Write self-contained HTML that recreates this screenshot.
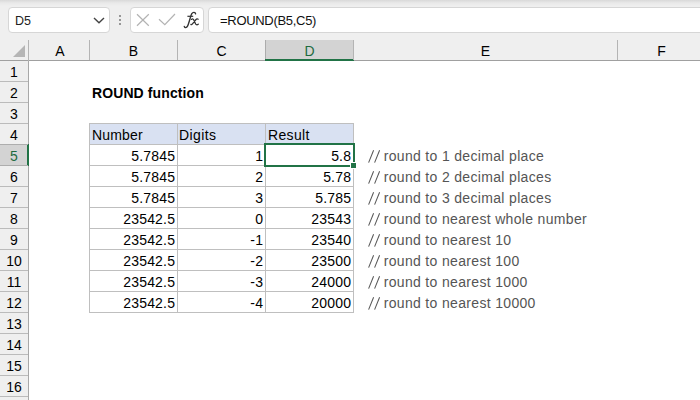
<!DOCTYPE html>
<html><head><meta charset="utf-8">
<style>
*{margin:0;padding:0;box-sizing:border-box}
html,body{width:700px;height:400px;overflow:hidden;background:#fff;font-family:"Liberation Sans",sans-serif}
.a{position:absolute}
#top{left:0;top:0;width:700px;height:40px;background:linear-gradient(#d9d9d9 0px,#e9e9e9 3px,#efefef 6px,#efefef 40px)}
.box{position:absolute;background:#fff;border:1px solid #d6d6d6;border-radius:4px}
#colhdr{left:0;top:40px;width:700px;height:21px;background:#efefef;border-bottom:1px solid #a0a0a0}
.ch{position:absolute;top:41px;height:20px;font-size:14px;line-height:20px;text-align:center;color:#000}
.vl{position:absolute;width:1px;background:#b4b4b4}
#rowhdr{left:0;top:61px;width:29px;height:339px;background:#efefef;border-right:1px solid #a8a8a8}
.rh{position:absolute;left:0;width:28px;height:20px;margin-top:1px;font-size:14px;line-height:20px;text-align:center;color:#000}
.hl{position:absolute;left:0;width:28px;height:1px;background:#bbbbbb}
.t{position:absolute;font-size:14px;white-space:pre;line-height:20px;height:20px;margin-top:1px}
.num{text-align:right;letter-spacing:0.2px}
.cm{color:#555;letter-spacing:0.33px;left:383.7px}
.sl{position:absolute;left:366px}
.sel{color:#1d6b3f}
.tb{position:absolute;background:#bfbfbf}
.cb{left:90px;width:85.2px}
.cc{left:178px;width:85.2px}
.cd{left:266px;width:85.2px}
</style></head><body>
<div id="top" class="a"></div>
<!-- name box -->
<div class="box" style="left:8px;top:7px;width:102px;height:26px"></div>
<div class="t" style="left:15px;top:10px;font-size:12.5px;color:#222">D5</div>
<svg class="a" style="left:93px;top:17px" width="12" height="7" viewBox="0 0 12 7"><path d="M1 1 L6 5.8 L11 1" fill="none" stroke="#444" stroke-width="1.4"/></svg>
<!-- dots -->
<div class="a" style="left:119px;top:15px;width:2px;height:2px;background:#7a7a7a;border-radius:1px"></div>
<div class="a" style="left:119px;top:19px;width:2px;height:2px;background:#7a7a7a;border-radius:1px"></div>
<div class="a" style="left:119px;top:23px;width:2px;height:2px;background:#7a7a7a;border-radius:1px"></div>
<!-- buttons box -->
<div class="box" style="left:130px;top:7px;width:74px;height:26px"></div>
<svg class="a" style="left:136px;top:13px" width="14" height="14" viewBox="0 0 14 14"><path d="M1 1.2 L12.8 12.8 M12.8 1.2 L1 12.8" fill="none" stroke="#b3b3b3" stroke-width="1.2"/></svg>
<svg class="a" style="left:158px;top:13px" width="18" height="13" viewBox="0 0 18 13"><path d="M1 6.3 L6.8 11.7 L17 1" fill="none" stroke="#b3b3b3" stroke-width="1.2"/></svg>
<svg class="a" style="left:180px;top:8px" width="22" height="22" viewBox="0 0 22 22"><path d="M15.6 5.9 C15.3 4.1 13 3.8 11.8 5.6 C10.5 7.6 9.2 15 7.4 18.4 C6.6 19.9 4.8 20 4.3 18.5" fill="none" stroke="#333" stroke-width="1.35" stroke-linecap="round"/><path d="M7.4 8.3 H13.2" stroke="#333" stroke-width="1.2"/><path d="M11.4 11.4 C12.4 10.6 13.4 10.9 13.9 12.3 L15.4 15.6 C15.9 16.9 17 17.1 18.3 16.2 M18.2 11.2 C17.2 10.6 16.4 11 15.6 12 L12.9 15.4 C12.1 16.5 11.4 16.9 10.9 16.5" fill="none" stroke="#333" stroke-width="1.25" stroke-linecap="round"/></svg>
<!-- formula box -->
<div class="box" style="left:208px;top:7px;width:500px;height:26px"></div>
<div class="t" style="left:220px;top:10px;font-size:13px;letter-spacing:-0.3px;color:#111">=ROUND(B5,C5)</div>

<!-- column header -->
<div id="colhdr" class="a"></div>
<div class="a" style="left:265px;top:40px;width:88px;height:19px;background:#d3d3d3"></div>
<div class="a" style="left:265px;top:59px;width:89px;height:2px;background:#217346"></div>
<div class="vl" style="left:28px;top:40px;height:21px"></div>
<div class="vl" style="left:89px;top:40px;height:20px"></div>
<div class="vl" style="left:177px;top:40px;height:20px"></div>
<div class="vl" style="left:265px;top:40px;height:19px;background:#acacac"></div>
<div class="vl" style="left:353px;top:40px;height:20px"></div>
<div class="vl" style="left:617px;top:40px;height:20px"></div>
<svg class="a" style="left:12px;top:44px" width="14" height="14" viewBox="0 0 14 14"><path d="M13 1 L13 13 L1 13 Z" fill="#b5b5b5"/></svg>
<div class="ch" style="left:30px;width:60px">A</div>
<div class="ch" style="left:90px;width:87px">B</div>
<div class="ch" style="left:178px;width:87px">C</div>
<div class="ch" style="left:266px;width:87px;color:#1d6b3f">D</div>
<div class="ch" style="left:354px;width:263px">E</div>
<div class="ch" style="left:618px;width:87px">F</div>

<!-- row header -->
<div id="rowhdr" class="a"></div>
<div class="a" style="left:0;top:145px;width:27px;height:20px;background:#d3d3d3"></div>
<div class="a" style="left:27px;top:144px;width:2px;height:22px;background:#217346"></div>
<div class="rh" style="top:61px">1</div>
<div class="hl" style="top:81px"></div>
<div class="rh" style="top:82px">2</div>
<div class="hl" style="top:102px"></div>
<div class="rh" style="top:103px">3</div>
<div class="hl" style="top:123px"></div>
<div class="rh" style="top:124px">4</div>
<div class="hl" style="top:144px;background:#adadad"></div>
<div class="rh sel" style="top:145px">5</div>
<div class="hl" style="top:165px;background:#adadad"></div>
<div class="rh" style="top:166px">6</div>
<div class="hl" style="top:186px"></div>
<div class="rh" style="top:187px">7</div>
<div class="hl" style="top:207px"></div>
<div class="rh" style="top:208px">8</div>
<div class="hl" style="top:228px"></div>
<div class="rh" style="top:229px">9</div>
<div class="hl" style="top:249px"></div>
<div class="rh" style="top:250px">10</div>
<div class="hl" style="top:270px"></div>
<div class="rh" style="top:271px">11</div>
<div class="hl" style="top:291px"></div>
<div class="rh" style="top:292px">12</div>
<div class="hl" style="top:312px"></div>
<div class="rh" style="top:313px">13</div>
<div class="hl" style="top:333px"></div>
<div class="rh" style="top:334px">14</div>
<div class="hl" style="top:354px"></div>
<div class="rh" style="top:355px">15</div>
<div class="hl" style="top:375px"></div>
<div class="rh" style="top:376px">16</div>
<div class="hl" style="top:396px"></div>
<div class="rh" style="top:397px">17</div>
<div class="hl" style="top:417px"></div>

<!-- table -->
<div class="a" style="left:89px;top:123px;width:265px;height:22px;background:#d9e1f2"></div>
<div class="a" style="left:89px;top:123px;width:265px;height:190px;border:1px solid #bfbfbf"></div>
<div class="tb" style="left:89px;top:144px;width:265px;height:1px"></div>
<div class="tb" style="left:89px;top:165px;width:265px;height:1px"></div>
<div class="tb" style="left:89px;top:186px;width:265px;height:1px"></div>
<div class="tb" style="left:89px;top:207px;width:265px;height:1px"></div>
<div class="tb" style="left:89px;top:228px;width:265px;height:1px"></div>
<div class="tb" style="left:89px;top:249px;width:265px;height:1px"></div>
<div class="tb" style="left:89px;top:270px;width:265px;height:1px"></div>
<div class="tb" style="left:89px;top:291px;width:265px;height:1px"></div>
<div class="tb" style="left:177px;top:123px;width:1px;height:190px"></div>
<div class="tb" style="left:265px;top:123px;width:1px;height:190px"></div>

<div class="t" style="left:92px;top:82px;font-weight:bold;letter-spacing:0.1px">ROUND function</div>
<div class="t" style="left:92px;top:124px;letter-spacing:0.15px">Number</div>
<div class="t" style="left:179px;top:124px;letter-spacing:0.4px">Digits</div>
<div class="t" style="left:268px;top:124px;letter-spacing:0.35px">Result</div>
<div class="t num cb" style="top:145px">5.7845</div>
<div class="t num cc" style="top:145px">1</div>
<div class="t num cd" style="top:145px">5.8</div>
<div class="t cm" style="top:145px">round to 1 decimal place</div>
<svg class="sl" style="top:149px" width="16" height="14" viewBox="0 0 16 14"><path d="M2.6 13.6 L7.6 1.2 M8.6 13.6 L13.6 1.2" stroke="#5a5a5a" stroke-width="1.05" fill="none"/></svg>
<div class="t num cb" style="top:166px">5.7845</div>
<div class="t num cc" style="top:166px">2</div>
<div class="t num cd" style="top:166px">5.78</div>
<div class="t cm" style="top:166px">round to 2 decimal places</div>
<svg class="sl" style="top:170px" width="16" height="14" viewBox="0 0 16 14"><path d="M2.6 13.6 L7.6 1.2 M8.6 13.6 L13.6 1.2" stroke="#5a5a5a" stroke-width="1.05" fill="none"/></svg>
<div class="t num cb" style="top:187px">5.7845</div>
<div class="t num cc" style="top:187px">3</div>
<div class="t num cd" style="top:187px">5.785</div>
<div class="t cm" style="top:187px">round to 3 decimal places</div>
<svg class="sl" style="top:191px" width="16" height="14" viewBox="0 0 16 14"><path d="M2.6 13.6 L7.6 1.2 M8.6 13.6 L13.6 1.2" stroke="#5a5a5a" stroke-width="1.05" fill="none"/></svg>
<div class="t num cb" style="top:208px">23542.5</div>
<div class="t num cc" style="top:208px">0</div>
<div class="t num cd" style="top:208px">23543</div>
<div class="t cm" style="top:208px">round to nearest whole number</div>
<svg class="sl" style="top:212px" width="16" height="14" viewBox="0 0 16 14"><path d="M2.6 13.6 L7.6 1.2 M8.6 13.6 L13.6 1.2" stroke="#5a5a5a" stroke-width="1.05" fill="none"/></svg>
<div class="t num cb" style="top:229px">23542.5</div>
<div class="t num cc" style="top:229px">-1</div>
<div class="t num cd" style="top:229px">23540</div>
<div class="t cm" style="top:229px">round to nearest 10</div>
<svg class="sl" style="top:233px" width="16" height="14" viewBox="0 0 16 14"><path d="M2.6 13.6 L7.6 1.2 M8.6 13.6 L13.6 1.2" stroke="#5a5a5a" stroke-width="1.05" fill="none"/></svg>
<div class="t num cb" style="top:250px">23542.5</div>
<div class="t num cc" style="top:250px">-2</div>
<div class="t num cd" style="top:250px">23500</div>
<div class="t cm" style="top:250px">round to nearest 100</div>
<svg class="sl" style="top:254px" width="16" height="14" viewBox="0 0 16 14"><path d="M2.6 13.6 L7.6 1.2 M8.6 13.6 L13.6 1.2" stroke="#5a5a5a" stroke-width="1.05" fill="none"/></svg>
<div class="t num cb" style="top:271px">23542.5</div>
<div class="t num cc" style="top:271px">-3</div>
<div class="t num cd" style="top:271px">24000</div>
<div class="t cm" style="top:271px">round to nearest 1000</div>
<svg class="sl" style="top:275px" width="16" height="14" viewBox="0 0 16 14"><path d="M2.6 13.6 L7.6 1.2 M8.6 13.6 L13.6 1.2" stroke="#5a5a5a" stroke-width="1.05" fill="none"/></svg>
<div class="t num cb" style="top:292px">23542.5</div>
<div class="t num cc" style="top:292px">-4</div>
<div class="t num cd" style="top:292px">20000</div>
<div class="t cm" style="top:292px">round to nearest 10000</div>
<svg class="sl" style="top:296px" width="16" height="14" viewBox="0 0 16 14"><path d="M2.6 13.6 L7.6 1.2 M8.6 13.6 L13.6 1.2" stroke="#5a5a5a" stroke-width="1.05" fill="none"/></svg>

<!-- selection -->
<div class="a" style="left:264px;top:143px;width:91px;height:24px;border:2px solid #217346"></div>
<div class="a" style="left:350px;top:162px;width:7px;height:7px;background:#fff"></div>
<div class="a" style="left:351px;top:163px;width:5px;height:5px;background:#217346"></div>
</body></html>
